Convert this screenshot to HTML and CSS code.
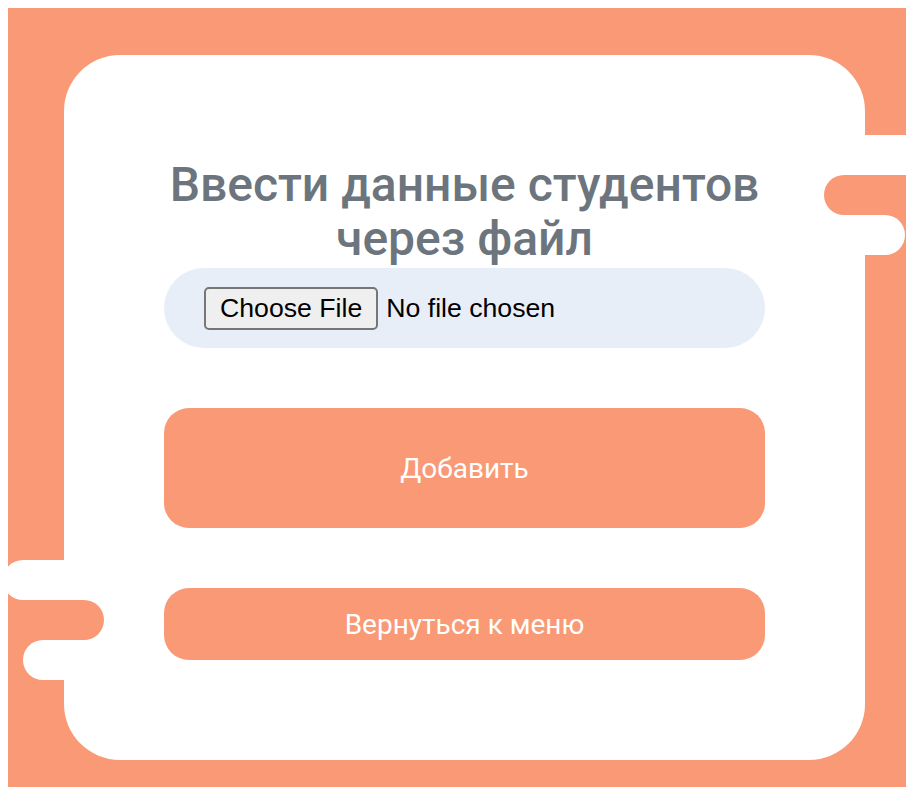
FILE: index.html
```html
<!DOCTYPE html>
<html lang="ru">
<head>
<meta charset="utf-8">
<title>Загрузка студентов</title>
<link rel="stylesheet" href="styles.css">
</head>
<body>
<div class="page">
  <span class="blob blob-r1"></span>
  <span class="blob blob-r2"></span>
  <span class="blob blob-r3"></span>
  <span class="blob blob-l1"></span>
  <span class="blob blob-l2"></span>
  <span class="blob blob-l3"></span>

  <main class="card">
    <h1 class="title">Ввести данные студентов<br>через файл</h1>
    <form class="upload-form">
      <label class="file-field">
        <input type="file" class="file-input" name="students">
      </label>
      <button type="submit" class="btn btn-add">Добавить</button>
      <button type="button" class="btn btn-back">Вернуться к меню</button>
    </form>
  </main>
</div>
</body>
</html>
```

FILE: styles.css
```css
html, body {
  overflow: hidden;
}

body {
  margin: 8px 0 0 8px;
  background: #ffffff;
  font-family: Roboto, "Noto Sans", sans-serif;
}

/* orange backdrop filling the window */
.page {
  position: relative;
  overflow: hidden;
  height: calc(100vh - 8px);
  background: #f99975;
  padding: 47px 0 0 56px;
  box-sizing: border-box;
}

/* wavy pill shapes that blend the card into the backdrop */
.blob {
  position: absolute;
  height: 40px;
  border-radius: 20px;
}

.blob-r1 {
  left: 832px;
  top: 127px;
  width: 200px;
  background: #ffffff;
  border-radius: 0;
}

.blob-r2 {
  left: 816px;
  top: 167px;
  width: 200px;
  background: #f99975;
}

.blob-r3 {
  left: 800px;
  top: 207px;
  width: 97px;
  background: #ffffff;
}

.blob-l1 {
  left: -5px;
  top: 552px;
  width: 100px;
  background: #ffffff;
}

.blob-l2 {
  left: -30px;
  top: 592px;
  width: 126px;
  background: #f99975;
}

.blob-l3 {
  left: 15px;
  top: 632px;
  width: 100px;
  background: #ffffff;
}

.card {
  width: 801px;
  box-sizing: border-box;
  background: #ffffff;
  border-radius: 56px;
  padding: 103px 100px 100px;
}

.title {
  margin: 0 0 2px;
  text-align: center;
  font-size: 48px;
  font-weight: 500;
  line-height: 54px;
  color: #6c757d;
}

.upload-form {
  display: flex;
  flex-direction: column;
  gap: 60px;
}

.file-field {
  display: flex;
  align-items: center;
  height: 80px;
  padding-left: 40px;
  border-radius: 40px;
  background: #e7eef7;
}

.file-input {
  zoom: 2;
  font-family: "Liberation Sans", Arial, sans-serif;
  font-size: 13.333px;
  color: #000000;
}

.btn {
  display: flex;
  align-items: center;
  justify-content: center;
  width: 100%;
  border: none;
  border-radius: 25px;
  background: #f99975;
  color: #ffffff;
  font-family: Roboto, "Noto Sans", sans-serif;
  font-size: 28px;
  font-weight: 400;
  cursor: pointer;
}

.btn-add {
  height: 120px;
}

.btn-back {
  height: 72px;
}
```
